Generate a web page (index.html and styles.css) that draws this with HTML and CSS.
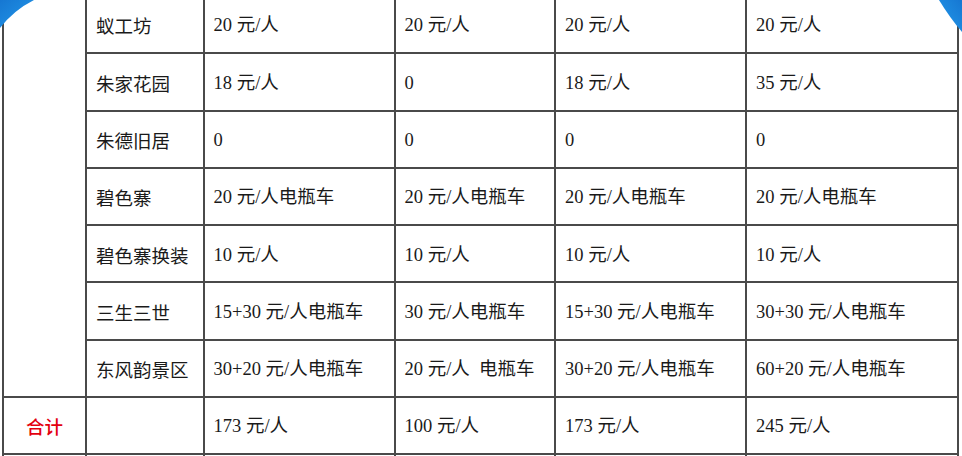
FILE: index.html
```html
<!DOCTYPE html>
<html lang="zh">
<head>
<meta charset="utf-8">
<link rel="stylesheet" href="styles.css">
</head>
<body>
<div class="page">
  <table class="fees">
    <colgroup>
      <col class="c1"><col class="c2"><col class="c3"><col class="c4"><col class="c5"><col class="c6">
    </colgroup>
    <tbody>
      <tr>
        <td class="group" rowspan="7"></td>
        <td class="name">蚁工坊</td>
        <td>20 元/人</td><td>20 元/人</td><td>20 元/人</td><td>20 元/人</td>
      </tr>
      <tr>
        <td class="name">朱家花园</td>
        <td>18 元/人</td><td>0</td><td>18 元/人</td><td>35 元/人</td>
      </tr>
      <tr>
        <td class="name">朱德旧居</td>
        <td>0</td><td>0</td><td>0</td><td>0</td>
      </tr>
      <tr>
        <td class="name">碧色寨</td>
        <td>20 元/人电瓶车</td><td>20 元/人电瓶车</td><td>20 元/人电瓶车</td><td>20 元/人电瓶车</td>
      </tr>
      <tr>
        <td class="name">碧色寨换装</td>
        <td>10 元/人</td><td>10 元/人</td><td>10 元/人</td><td>10 元/人</td>
      </tr>
      <tr>
        <td class="name">三生三世</td>
        <td>15+30 元/人电瓶车</td><td>30 元/人电瓶车</td><td>15+30 元/人电瓶车</td><td>30+30 元/人电瓶车</td>
      </tr>
      <tr>
        <td class="name">东风韵景区</td>
        <td>30+20 元/人电瓶车</td><td>20 元/人&nbsp; 电瓶车</td><td>30+20 元/人电瓶车</td><td>60+20 元/人电瓶车</td>
      </tr>
      <tr>
        <td class="total">合计</td>
        <td class="name"></td>
        <td>173 元/人</td><td>100 元/人</td><td>173 元/人</td><td>245 元/人</td>
      </tr>
      <tr class="next">
        <td></td><td></td><td></td><td></td><td></td><td></td>
      </tr>
    </tbody>
  </table>
  <svg class="corner corner-left" width="40" height="34" viewBox="0 0 40 34">
    <defs>
      <linearGradient id="gl" x1="0" y1="0" x2="1" y2="1">
        <stop offset="0" stop-color="#1677d2"/>
        <stop offset="0.7" stop-color="#1f8fe3"/>
        <stop offset="1" stop-color="#7cc3f2"/>
      </linearGradient>
    </defs>
    <path d="M0 0 H34 Q14 10 0 28 Z" fill="url(#gl)"/>
  </svg>
  <svg class="corner corner-right" width="24" height="36" viewBox="0 0 24 36">
    <defs>
      <linearGradient id="gr" x1="1" y1="0" x2="0" y2="1">
        <stop offset="0" stop-color="#1677d2"/>
        <stop offset="0.7" stop-color="#1f8fe3"/>
        <stop offset="1" stop-color="#7cc3f2"/>
      </linearGradient>
    </defs>
    <path d="M1 0 H24 V32 Q12 18 1 0 Z" fill="url(#gr)"/>
  </svg>
</div>
</body>
</html>
```
FILE: styles.css
```css
html, body {
  margin: 0;
  padding: 0;
  background: #ffffff;
}

.page {
  position: relative;
  width: 962px;
  height: 456px;
  overflow: hidden;
}

.fees {
  border-collapse: collapse;
  table-layout: fixed;
  width: 956px;
  margin: -5px 0 0 2px;
  font-family: "Liberation Serif", "Noto Sans CJK SC", serif;
  font-size: 18.5px;
  color: #1a1a1a;
}

.c1 { width: 83px; }
.c2 { width: 117.5px; }
.c3 { width: 191px; }
.c4 { width: 160.5px; }
.c5 { width: 191px; }
.c6 { width: 212px; }

.fees td {
  border: 2px solid #4a4a4a;
  height: 57.3px;
  padding: 2px 0 0 9px;
  box-sizing: border-box;
  vertical-align: middle;
  white-space: nowrap;
  line-height: 1;
}

.fees td.name {
  font-family: "Noto Sans CJK SC", sans-serif;
}

.fees td.total {
  font-family: "Noto Sans CJK SC", sans-serif;
  font-weight: 500;
  color: #e3000f;
  text-align: center;
  padding: 2px 0 0 0;
}

.fees td.group {
  padding: 0;
}

.corner {
  position: absolute;
  top: 0;
  display: block;
}

.corner-left { left: 0; }
.corner-right { right: 0; }
```
